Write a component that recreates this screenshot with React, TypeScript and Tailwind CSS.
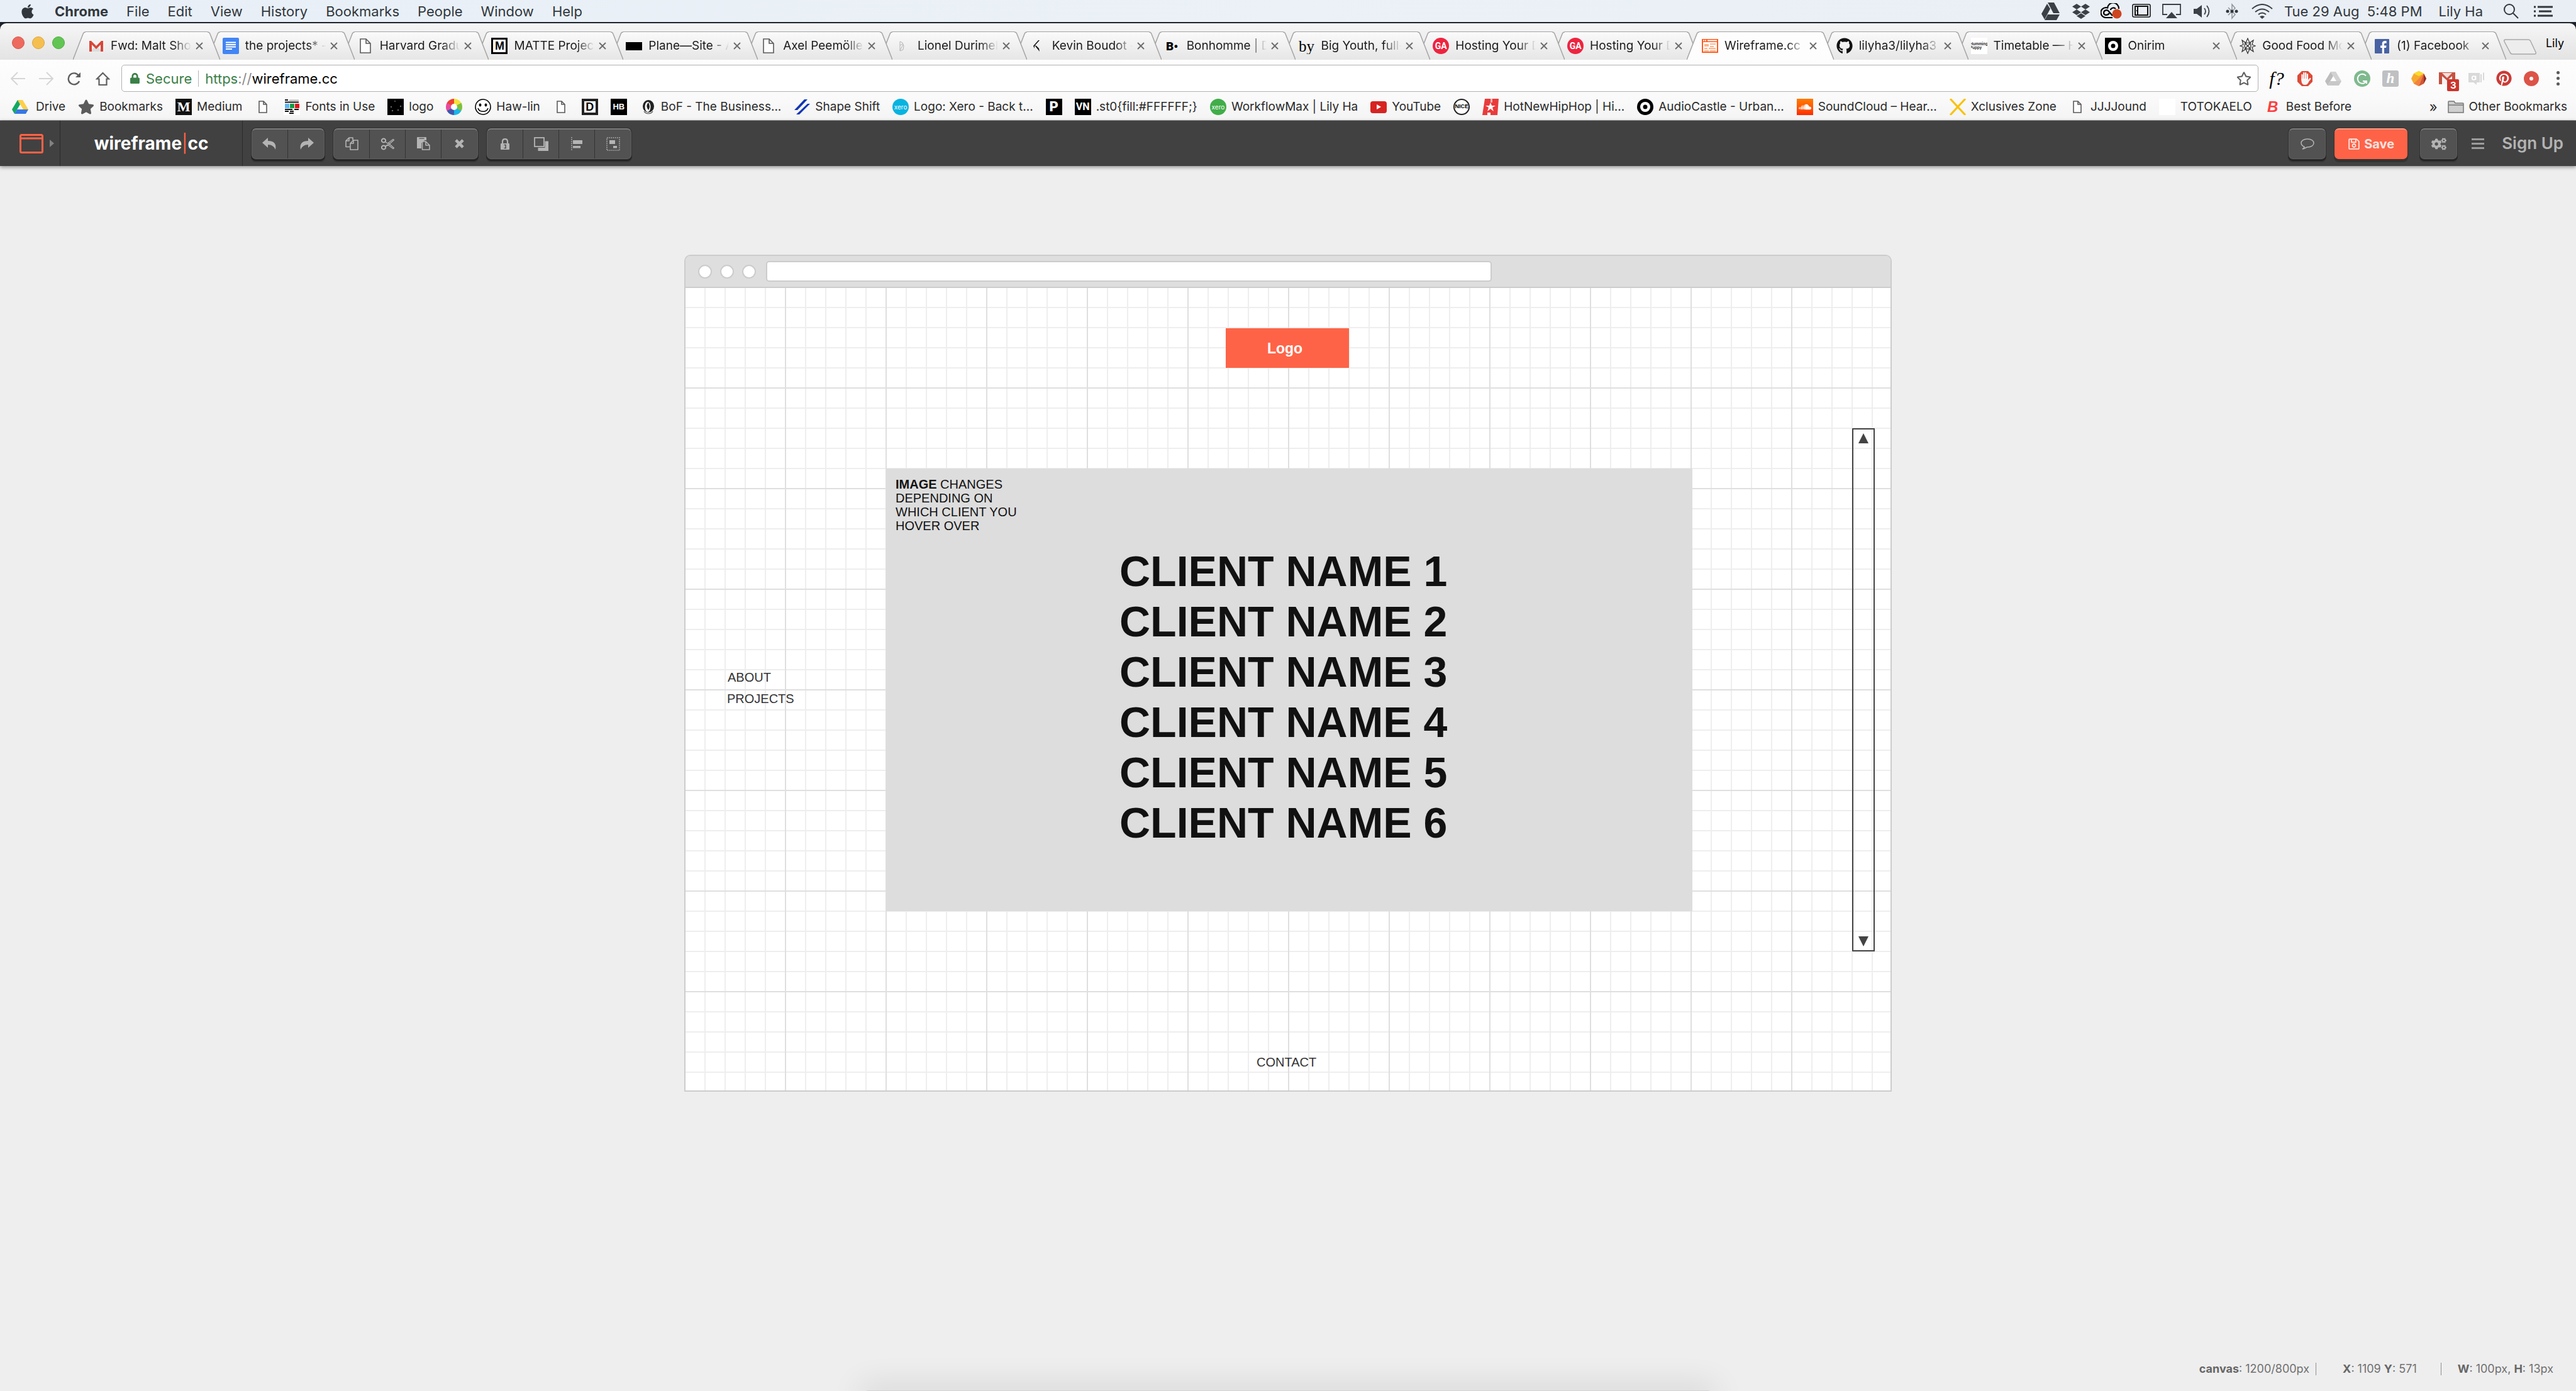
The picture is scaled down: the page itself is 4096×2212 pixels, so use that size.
import React from "react";
import type { ReactNode } from "react";
import {
  FaApple,
  FaCogs,
  FaDropbox,
  FaGithub,
  FaGoogleDrive,
  FaLock,
  FaPinterest,
  FaRegSave,
  FaRegStar,
  FaSoundcloud,
  FaStar,
} from "react-icons/fa";

/* ---------- small drawings ---------- */

function PageIcon({ big = false }: { big?: boolean }) {
  return (
    <svg viewBox="0 0 26 26" className={big ? "h-[28px] w-[26px]" : "h-[26px] w-[26px]"} fill="#fdfdfd" stroke="#5a5a5a" strokeWidth="1.6">
      <path d={big ? "M5 2h9l7 7v15H5z M14 2v7h7" : "M7 4h7l5 5v13H7z M14 4v5h5"} />
    </svg>
  );
}

function Tile({ className, children }: { className: string; children?: ReactNode }) {
  return (
    <span className={`flex h-[26px] w-[26px] shrink-0 items-center justify-center overflow-hidden leading-none ${className}`}>
      {children}
    </span>
  );
}

function GmailIcon() {
  return (
    <svg viewBox="0 0 26 26" className="h-[26px] w-[26px]">
      <rect x="2" y="5" width="22" height="17" fill="#f4f4f4" />
      <path d="M2 22l11-9 11 9z" fill="#dcdcdc" />
      <path d="M2 5h3l8 8 8-8h3v17h-4V11l-7 7-7-7v11H2z" fill="#d8463a" />
    </svg>
  );
}

function DocsIcon() {
  return (
    <svg viewBox="0 0 26 26" className="h-[26px] w-[26px]">
      <rect width="26" height="26" rx="2" fill="#4285f4" />
      <path d="M5 7.500h16M5 11h16M5 14.500h16M5 18h10" stroke="#fff" strokeWidth="1.800" />
    </svg>
  );
}

function MatteIcon() {
  return (
    <Tile className="border-[3px] border-black bg-white font-['Liberation_Sans'] text-[18px] font-bold text-black">M</Tile>
  );
}

function LeafSketch() {
  return (
    <svg viewBox="0 0 26 26" className="h-[26px] w-[26px]" fill="none" stroke="#b5b5b5" strokeWidth="1">
      <path d="M8 6l4 2 2 5-1 6-5 2zM8 12l4-2M8 20l5-9" />
    </svg>
  );
}

function KevinIcon() {
  return (
    <svg viewBox="0 0 26 26" className="h-[26px] w-[26px]" fill="#111">
      <path d="M14 4l2 0-8 9 0 4-2-4zM8 12l3 1 4 4 1 5z" />
    </svg>
  );
}

function GaIcon() {
  return (
    <Tile className="rounded-full bg-[#ee2440] font-['Roboto'] text-[14px] font-bold text-white">GA</Tile>
  );
}

function WireframeIcon() {
  return (
    <svg viewBox="0 0 26 26" className="h-[26px] w-[26px]">
      <rect x="1" y="3" width="24" height="20" fill="#fff" stroke="#ff5a1f" strokeWidth="2" />
      <rect x="0" y="2" width="26" height="5" fill="#ff5a1f" />
      <path d="M2 4.500h2M5 4.500h2M9 4.500h15" stroke="#fff" strokeWidth="2" />
      <path d="M4 11h7M4 13h7M13 10h9M13 14h6M4 17h5M11 17h11M4 20.500h7M13 20.500h9" stroke="#ffb38a" strokeWidth="2" />
    </svg>
  );
}

function RingIcon() {
  return (
    <Tile className="bg-black">
      <svg viewBox="0 0 26 26" className="h-[26px] w-[26px]">
        <circle cx="13" cy="13" r="8" fill="#fff" />
        <circle cx="13" cy="13" r="3.500" fill="#000" />
      </svg>
    </Tile>
  );
}

function StarFlower() {
  return (
    <svg viewBox="0 0 26 26" className="h-[26px] w-[26px]" fill="none" stroke="#333" strokeWidth="1.200">
      <path d="M13 1l3 7 6-4-2 7 5 2-5 2 2 7-6-4-3 7-3-7-6 4 2-7-5-2 5-2-2-7 6 4z" />
      <circle cx="13" cy="13" r="5" />
      <path d="M8 8l10 10M18 8L8 18" />
    </svg>
  );
}

function FacebookIcon() {
  return (
    <svg viewBox="0 0 26 26" className="h-[26px] w-[26px]">
      <rect x="1" y="2" width="23" height="23" rx="1" fill="#4862a3" />
      <path d="M16 25v-9h3l.5-3.500H16v-2c0-1.200.5-1.800 2-1.800h1.700V5.200c-3.500-.6-7 .1-7 4.300v3H10V16h2.700v9z" fill="#fff" />
    </svg>
  );
}

function DriveColor() {
  return (
    <svg viewBox="0 0 26 26" className="h-[26px] w-[26px]">
      <path d="M9 2h8l9 15h-8z" fill="#ffcf48" />
      <path d="M9 2l4 7-9 15-4-7z" fill="#11a861" />
      <path d="M8 17h18l-4 7H4z" fill="#3777e3" />
    </svg>
  );
}

function DriveGrey() {
  return (
    <svg viewBox="0 0 26 26" className="h-[26px] w-[26px]">
      <path d="M9 2h8l9 15h-8z" fill="#d2d2d2" />
      <path d="M9 2l4 7-9 15-4-7z" fill="#bdbdbd" />
      <path d="M8 17h18l-4 7H4z" fill="#c8c8c8" />
      <path d="M13 10l4 7H9z" fill="#fff" />
    </svg>
  );
}

function FontsInUseIcon() {
  return (
    <Tile className="bg-white">
      <svg viewBox="0 0 26 26" className="h-[26px] w-[26px]">
        <path d="M2 2h5M2 5.500h22M2 17h12M17 17h7M2 20h6M10 20h6M9 23h7" stroke="#111" strokeWidth="1.800" />
        <path d="M9 2.500h15" stroke="#aaa" strokeWidth="1.800" />
        <rect x="2" y="8" width="7" height="7" fill="#5fb5ec" />
        <rect x="10" y="8" width="7" height="7" fill="#139a43" />
        <rect x="18" y="8" width="7" height="7" fill="#e2121c" />
      </svg>
    </Tile>
  );
}

function DotsTile() {
  return (
    <Tile className="bg-black">
      <svg viewBox="0 0 26 26" className="h-[26px] w-[26px]" fill="#666">
        <circle cx="12" cy="4" r="1" />
        <circle cx="6" cy="13" r="1.200" />
        <circle cx="21" cy="12" r="1.200" />
        <circle cx="8" cy="19" r="1.200" />
        <circle cx="17" cy="18" r="1.200" />
      </svg>
    </Tile>
  );
}

function WheelIcon() {
  return (
    <span className="flex h-[26px] w-[26px] items-center justify-center rounded-full bg-[conic-gradient(#f5e13a_0_60deg,#7cc13c_0_120deg,#19b5ea_0_180deg,#3b58b0_0_240deg,#e64a9c_0_300deg,#ee4130_0)]">
      <span className="h-[10px] w-[10px] rounded-full bg-white" />
    </span>
  );
}

function FaceIcon() {
  return (
    <svg viewBox="0 0 26 26" className="h-[26px] w-[26px]">
      <circle cx="13" cy="13" r="12" fill="#fff" stroke="#000" strokeWidth="1.600" />
      <ellipse cx="8.500" cy="10" rx="2" ry="2.400" />
      <ellipse cx="17.500" cy="10" rx="2" ry="2.400" />
      <path d="M5 15c2 7 14 7 16 0" fill="none" stroke="#000" strokeWidth="1.500" />
    </svg>
  );
}

function BofIcon() {
  return (
    <svg viewBox="0 0 26 26" className="h-[26px] w-[26px]">
      <ellipse cx="14" cy="12" rx="9" ry="10" fill="#222" />
      <ellipse cx="13" cy="13" rx="4.500" ry="8" fill="#fff" />
      <path d="M14 6c-4 4-3 8 0 12 3-4 2-8 0-12z" fill="#222" />
      <path d="M7 20c3 5 11 5 14 0" fill="none" stroke="#444" strokeWidth="1.200" />
    </svg>
  );
}

function ShapeShiftIcon() {
  return (
    <svg viewBox="0 0 26 26" className="h-[26px] w-[26px]" fill="#1236b4">
      <path d="M17 1h5L6 18H1zM22 8h4L9 25H4z" />
    </svg>
  );
}

function YoutubeIcon() {
  return (
    <svg viewBox="0 0 26 26" className="h-[26px] w-[26px]">
      <rect x="0" y="4" width="26" height="19" rx="4" fill="#d62422" />
      <path d="M10 9v8l7-4z" fill="#fff" />
    </svg>
  );
}

function NiceIcon() {
  return (
    <Tile className="rounded-full border-2 border-[#222] bg-white font-['Liberation_Sans'] text-[9px] font-bold text-black">NICE</Tile>
  );
}

function HiphopIcon() {
  return (
    <svg viewBox="0 0 26 26" className="h-[26px] w-[26px]">
      <path d="M4 0h22l-2 26H13v-4l-5 0v4H0z" fill="#ea3b3b" />
      <path d="M13 0h3v6h-3z" fill="#f6b1b1" />
      <path d="M13 6l2 5h6l-5 3 2 6-5-4-5 4 2-6-5-3h6z" fill="#fff" />
    </svg>
  );
}

function TargetIcon() {
  return (
    <svg viewBox="0 0 26 26" className="h-[26px] w-[26px]">
      <circle cx="13" cy="13" r="13" />
      <circle cx="13" cy="13" r="8" fill="#fff" />
      <circle cx="13" cy="13" r="3.500" />
    </svg>
  );
}

function XIcon() {
  return (
    <svg viewBox="0 0 26 26" className="h-[26px] w-[26px]" stroke="#fac100" strokeWidth="3">
      <path d="M1 0l24 26M25 0L1 26" />
    </svg>
  );
}

function FolderIcon() {
  return (
    <svg viewBox="0 0 26 26" className="h-[26px] w-[26px]" fill="#cfcfcf" stroke="#777" strokeWidth="1.500">
      <path d="M1 22V5q0-1 1-1h8l2 3h12q1 0 1 1v14zM1 10h24" />
    </svg>
  );
}

/* ---------- macOS menu bar ---------- */

const MENUS = ["File", "Edit", "View", "History", "Bookmarks", "People", "Window", "Help"];

function StatusSlot({ label, children }: { label: string; children: ReactNode }) {
  return (
    <button aria-label={label} className="flex h-[30px] w-[34px] items-center justify-center text-[#3a4045]">
      {children}
    </button>
  );
}

function MenuBar() {
  return (
    <header className="flex h-[35px] items-center bg-linear-to-r from-[#e8eff7] via-[#ebf1f6] to-[#e9eef5] pr-[37px] pl-[32px] text-[22px] leading-none text-[#31373c]">
      <button aria-label="Apple menu">
        <FaApple className="h-[26px] w-[24px]" />
      </button>
      <nav className="ml-[31px] flex items-center gap-[29px]">
        <button className="font-bold">Chrome</button>
        {MENUS.map((m) => (
          <button key={m}>{m}</button>
        ))}
      </nav>
      <div className="ml-auto flex items-center gap-[14px]">
        <StatusSlot label="Drive">
          <svg viewBox="0 0 30 28" className="h-[28px] w-[30px]" fill="currentColor">
            <path d="M10 0h10l9 17H19zM9 2l5 8-9 17-5-9zM10 19h19l-5 9H5z" />
          </svg>
        </StatusSlot>
        <StatusSlot label="Dropbox">
          <FaDropbox className="h-[28px] w-[28px]" />
        </StatusSlot>
        <StatusSlot label="Creative Cloud">
          <svg viewBox="0 0 34 26" className="h-[26px] w-[34px]" fill="none" stroke="#000" strokeWidth="2.200">
            <path d="M9 23a8 8 0 0 1-1-16c2 0 3 .5 4 1.200M5 15a4.500 4.500 0 0 1 8-2l6 7" />
            <path d="M11 8a9 9 0 0 1 18 1M16 11c0-3 5-5 8-2M9 23h10" />
            <path d="M5 15c0 5 6 5 9 1" />
            <circle cx="26" cy="17" r="7.500" fill="#cf4520" stroke="none" />
          </svg>
        </StatusSlot>
        <StatusSlot label="Window manager">
          <svg viewBox="0 0 30 24" className="h-[24px] w-[30px]" fill="none" stroke="#111" strokeWidth="2">
            <rect x="1" y="1" width="28" height="20" rx="2" strokeWidth="1.500" />
            <rect x="5" y="4" width="20" height="14" />
            <path d="M9 4v14M7 11h3" />
          </svg>
        </StatusSlot>
        <StatusSlot label="AirPlay">
          <svg viewBox="0 0 30 24" className="h-[24px] w-[30px]" fill="none" stroke="currentColor" strokeWidth="1.800">
            <path d="M8 17H1V1h28v16h-7" />
            <path d="M15 13l9 10H6z" fill="currentColor" stroke="none" />
          </svg>
        </StatusSlot>
        <StatusSlot label="Volume">
          <svg viewBox="0 0 28 24" className="h-[24px] w-[28px]" fill="none" stroke="currentColor" strokeWidth="1.800">
            <path d="M1 8h5l8-6v20l-8-6H1z" fill="currentColor" stroke="none" />
            <path d="M18 7q4 5 0 10M22 3q7 9 0 18" />
          </svg>
        </StatusSlot>
        <StatusSlot label="Bluetooth">
          <svg viewBox="0 0 20 26" className="h-[26px] w-[20px]">
            <path d="M4 7l11 11-5 6V2l5 6L4 19" fill="none" stroke="#8d949a" strokeWidth="1.500" />
            <g fill="#30363b">
              <circle cx="3" cy="13" r="2.500" />
              <circle cx="10" cy="13" r="2.500" />
              <circle cx="17" cy="13" r="2.500" />
            </g>
          </svg>
        </StatusSlot>
        <StatusSlot label="Wi-Fi">
          <svg viewBox="0 0 34 24" className="h-[24px] w-[34px]" fill="none" stroke="currentColor" strokeWidth="2">
            <path d="M1 8q16-14 32 0M6 13q11-9 22 0M11 17q6-5 12 0" />
            <path d="M13 20.500q4-3 8 0l-4 3.500z" fill="currentColor" stroke="none" />
          </svg>
        </StatusSlot>
      </div>
      <button className="ml-[18px] whitespace-pre">{"Tue 29 Aug  5:48 PM"}</button>
      <button className="ml-[26px]">Lily Ha</button>
      <button aria-label="Search" className="ml-[33px]">
        <svg viewBox="0 0 24 24" className="h-[24px] w-[24px]" fill="none" stroke="currentColor" strokeWidth="2">
          <circle cx="9" cy="9" r="8" />
          <path d="M15 15l8 8" />
        </svg>
      </button>
      <button aria-label="Notification centre" className="ml-[24px]">
        <svg viewBox="0 0 30 18" className="h-[18px] w-[30px]" stroke="currentColor" strokeWidth="3">
          <path d="M0 2h3M0 9h3M0 16h3M6 2h24M8 9h20M6 16h24" />
        </svg>
      </button>
    </header>
  );
}

/* ---------- browser tabs ---------- */

type TabInfo = { title: string; icon: ReactNode; active?: boolean };

const TABS: TabInfo[] = [
  { title: "Fwd: Malt Sho", icon: <GmailIcon /> },
  { title: "the projects* -", icon: <DocsIcon /> },
  { title: "Harvard Gradu", icon: <PageIcon big /> },
  { title: "MATTE Project", icon: <MatteIcon /> },
  { title: "Plane—Site - A", icon: <span className="h-[13px] w-[26px] bg-black" /> },
  { title: "Axel Peemöller", icon: <PageIcon big /> },
  { title: "Lionel Durimel", icon: <LeafSketch /> },
  { title: "Kevin Boudot -", icon: <KevinIcon /> },
  { title: "Bonhomme | D", icon: <Tile className="font-['Roboto'] text-[19px] font-black text-black">B•</Tile> },
  { title: "Big Youth, full-", icon: <Tile className="font-['Liberation_Serif'] text-[25px] text-black">by</Tile> },
  { title: "Hosting Your D", icon: <GaIcon /> },
  { title: "Hosting Your D", icon: <GaIcon /> },
  { title: "Wireframe.cc -", icon: <WireframeIcon />, active: true },
  { title: "lilyha3/lilyha3", icon: <FaGithub className="h-[26px] w-[26px] text-[#111]" /> },
  { title: "Timetable — H", icon: <Tile className="bg-white text-[6px] font-bold text-[#333]">Humming Puppy</Tile> },
  { title: "Onirim", icon: <RingIcon /> },
  { title: "Good Food Mo", icon: <StarFlower /> },
  { title: "(1) Facebook", icon: <FacebookIcon /> },
];

function TabEdge({ active, flip = false }: { active: boolean; flip?: boolean }) {
  const id = active ? "tab-active" : "tab-idle";
  return (
    <svg viewBox="0 0 20 45" className={flip ? "h-[45px] w-5 shrink-0 -scale-x-100" : "h-[45px] w-5 shrink-0"}>
      <linearGradient id={id} x1="0" y1="0" x2="0" y2="1">
        <stop offset="0" stopColor={active ? "#fefefe" : "#fafafa"} />
        <stop offset="1" stopColor={active ? "#fdfdfd" : "#e6e6e6"} />
      </linearGradient>
      <path d="M0 45L16 4Q17 1 20 1V45z" fill={`url(#${id})`} />
      <path d="M0 45L16 4Q17 1 20 1" fill="none" stroke="#a4a4a4" strokeWidth="1.500" />
    </svg>
  );
}

function Tab({ tab, order }: { tab: TabInfo; order: number }) {
  const active = !!tab.active;
  return (
    <div
      role="tab"
      aria-selected={active}
      className="relative -mr-5 flex h-[45px] min-w-0 flex-1 last:mr-0"
      style={{ zIndex: active ? 40 : order }}
    >
      <TabEdge active={active} />
      <div
        className={
          active
            ? "flex min-w-0 flex-1 items-center border-t border-[#a4a4a4] bg-[#fdfdfd] pl-1"
            : "flex min-w-0 flex-1 items-center border-t border-[#a4a4a4] bg-linear-to-b from-[#fafafa] to-[#e6e6e6] pl-1"
        }
      >
        <span className="flex h-[28px] w-[26px] shrink-0 items-center justify-center">{tab.icon}</span>
        <span className="ml-[10px] min-w-0 flex-1 overflow-hidden text-[19px] leading-6 whitespace-nowrap text-[#1b1b1b] [mask-image:linear-gradient(90deg,#000_78%,transparent)]">
          {tab.title}
        </span>
        <button aria-label={`Close ${tab.title}`} className="flex h-[26px] w-[26px] shrink-0 items-center justify-center">
          <svg viewBox="0 0 12 12" className="h-[12px] w-[12px]" stroke="#6b6b6b" strokeWidth="1.800">
            <path d="M1 1l10 10M11 1L1 11" />
          </svg>
        </button>
      </div>
      <TabEdge active={active} flip />
    </div>
  );
}

function TabStrip() {
  return (
    <div className="bg-[#1d232b] pt-[2px]">
      <div className="flex h-[58px] items-end rounded-t-[10px] bg-linear-to-b from-[#f6f6f6] to-[#e3e3e3] pr-[19px]">
        <div className="flex h-full w-[116px] shrink-0 items-center gap-3 pt-1 pl-[19px]">
          <button aria-label="Close window" className="h-[20px] w-[20px] rounded-full border border-[#d9534c] bg-[#ed6a5e]" />
          <button aria-label="Minimise window" className="h-[20px] w-[20px] rounded-full border border-[#dfa23c] bg-[#f5bf4f]" />
          <button aria-label="Zoom window" className="h-[20px] w-[20px] rounded-full border border-[#4aad3d] bg-[#61c554]" />
        </div>
        <div role="tablist" className="isolate flex min-w-0 flex-1">
          {TABS.map((t, i) => (
            <Tab key={i} tab={t} order={TABS.length - i} />
          ))}
        </div>
        <button aria-label="New tab" className="-ml-1 mb-2">
          <svg viewBox="0 0 52 25" className="h-[25px] w-[52px]" fill="#ededed" stroke="#a8a8a8" strokeWidth="1.500">
            <path d="M3 1h36q3 0 4 3l8 17q1 3-2 3H14q-3 0-4-3L1 4q-1-3 2-3z" />
          </svg>
        </button>
        <button className="mb-[14px] ml-[15px] text-[18px] leading-6 text-black">Lily</button>
      </div>
    </div>
  );
}

/* ---------- address row ---------- */

function AddressRow() {
  return (
    <div className="flex h-[59px] items-center bg-linear-to-b from-[#fdfdfd] to-[#fafafa] pr-[26px] pl-[17px]">
      <div className="flex w-[176px] shrink-0 items-center gap-[22px]">
        <button aria-label="Back">
          <svg viewBox="0 0 23 22" className="h-[22px] w-[23px]" fill="none" stroke="#d6d6d6" strokeWidth="2">
            <path d="M23 11H2M11 1L1 11l10 10" />
          </svg>
        </button>
        <button aria-label="Forward">
          <svg viewBox="0 0 23 22" className="h-[22px] w-[23px]" fill="none" stroke="#d6d6d6" strokeWidth="2">
            <path d="M0 11h21M12 1l10 10-10 10" />
          </svg>
        </button>
        <button aria-label="Reload">
          <svg viewBox="0 0 23 22" className="h-[22px] w-[23px]" fill="none" stroke="#5f5f5f" strokeWidth="2.400">
            <path d="M19 15a9 9 0 1 1-1-9" />
            <path d="M21 1v8h-8z" fill="#5f5f5f" stroke="none" />
          </svg>
        </button>
        <button aria-label="Home">
          <svg viewBox="0 0 23 22" className="h-[22px] w-[23px]" fill="none" stroke="#5f5f5f" strokeWidth="2.200">
            <path d="M2 11.500L11.500 2l9.500 9.500h-3.500V21h-12v-9.500z" />
          </svg>
        </button>
      </div>
      <div className="flex h-[43px] min-w-0 flex-1 items-center rounded-[5px] border border-[#b2b2b2] bg-white pr-[10px] pl-[13px] text-[22px] leading-none">
        <FaLock className="h-[17px] w-[15px] text-[#3b8048]" />
        <span className="ml-[10px] text-[#3b8048]">Secure</span>
        <span className="mx-[10px] h-[26px] w-px bg-[#b5b5b5]" />
        <label htmlFor="url" className="text-[#8a8a8a]">
          <span className="text-[#3b8048]">https</span>://
        </label>
        <input id="url" defaultValue="wireframe.cc" className="h-[30px] min-w-0 flex-1 text-black outline-none" />
        <button aria-label="Bookmark this page">
          <FaRegStar className="h-[24px] w-[24px] text-[#5f5f5f]" />
        </button>
      </div>
      <div className="ml-4 flex w-[430px] shrink-0 items-center justify-between">
        <button aria-label="Font finder" className="flex h-[26px] w-[26px] items-center justify-center font-['Liberation_Serif'] text-[30px] leading-none text-black italic">
          f?
        </button>
        <button aria-label="Ad blocker">
          <svg viewBox="0 0 26 26" className="h-[26px] w-[26px]">
            <path d="M8 1h10l7 7v10l-7 7H8l-7-7V8z" fill="#dd4a38" />
            <path d="M8.500 7v8M11.300 4v11M14.200 4v11M17 6v9M21.500 13l-4 5" stroke="#fff" strokeWidth="2.200" strokeLinecap="round" />
            <path d="M7.400 13h10.700l1 5q-2 5-6 5-5 0-5.700-6z" fill="#f6f6f6" />
          </svg>
        </button>
        <button aria-label="Save to Drive">
          <DriveGrey />
        </button>
        <button aria-label="Grammar checker">
          <svg viewBox="0 0 26 26" className="h-[26px] w-[26px]" fill="none" stroke="#fff" strokeWidth="2">
            <circle cx="13" cy="13" r="13" fill="#7fba8e" stroke="none" />
            <path d="M19 8.500a7.500 7.500 0 1 0 1 8M14 17h6v4" />
          </svg>
        </button>
        <button aria-label="Coupons" className="flex h-[26px] w-[26px] items-center justify-center rounded-[3px] bg-[#bfc0c2] font-['Liberation_Serif'] text-[23px] leading-none font-bold text-white italic">
          h
        </button>
        <button aria-label="Gem">
          <svg viewBox="0 0 26 26" className="h-[26px] w-[26px]">
            <path d="M13 1l8 4 4 8-4 8-8 4-8-4-4-8 4-8z" fill="#f7a92f" />
            <path d="M13 1l8 4-8 4-8-4z" fill="#fbdc2c" />
            <path d="M21 5l4 8-4 8z" fill="#8c2f2c" />
            <path d="M21 5v16l-8 4z" fill="#d2553a" />
            <path d="M21 5l-8 20-8-4z" fill="#f08340" />
          </svg>
        </button>
        <button aria-label="Mail notifier, 3 unread" className="relative h-[26px] w-[26px]">
          <svg viewBox="0 0 26 26" className="h-[26px] w-[26px]">
            <rect y="3" width="26" height="19" fill="#c6513f" />
            <path d="M5 22V9l8 7 8-7v13z" fill="#f5f2f1" />
            <path d="M5 4l8 8 8-8z" fill="#f3dedb" />
          </svg>
          <span className="absolute top-[14px] left-[13px] flex h-[19px] w-[19px] items-center justify-center rounded-[2px] bg-[#cc352c] text-[15px] leading-none font-bold text-white">
            3
          </span>
        </button>
        <button aria-label="Chat">
          <svg viewBox="0 0 26 26" className="h-[26px] w-[26px]" fill="#d9d9d9">
            <path d="M1 4h18v15h-5v4l-5-4H1zM20 6h2v13h-2zM24 4l2-1v13l-2-1z" />
            <circle cx="9.500" cy="12" r="2.800" fill="none" stroke="#fff" strokeWidth="1.800" />
            <path d="M12.500 8.500V15" stroke="#fff" strokeWidth="1.800" />
          </svg>
        </button>
        <button aria-label="Pin it">
          <FaPinterest className="h-[25px] w-[25px] text-[#cb3a36]" />
        </button>
        <button aria-label="Recorder" className="flex h-[24px] w-[24px] items-center justify-center rounded-full bg-[#dd5347]">
          <span className="h-[6px] w-[6px] rounded-full bg-white" />
        </button>
      </div>
      <button aria-label="Browser menu" className="ml-[28px] flex flex-col gap-1">
        <span className="h-[5px] w-[5px] rounded-full bg-[#5a5a5a]" />
        <span className="h-[5px] w-[5px] rounded-full bg-[#5a5a5a]" />
        <span className="h-[5px] w-[5px] rounded-full bg-[#5a5a5a]" />
      </button>
    </div>
  );
}

/* ---------- bookmarks ---------- */

type Bookmark = { text?: string; icon: ReactNode };

const BOOKMARKS: Bookmark[] = [
  { text: "Drive", icon: <DriveColor /> },
  { text: "Bookmarks", icon: <FaStar className="h-[26px] w-[26px] text-[#5b5b5b]" /> },
  { text: "Medium", icon: <Tile className="bg-[#111] font-['Liberation_Serif'] text-[22px] font-bold text-white">M</Tile> },
  { icon: <PageIcon /> },
  { text: "Fonts in Use", icon: <FontsInUseIcon /> },
  { text: "logo", icon: <DotsTile /> },
  { icon: <WheelIcon /> },
  { text: "Haw-lin", icon: <FaceIcon /> },
  { icon: <PageIcon /> },
  { icon: <Tile className="border-[4px] border-[#222] bg-white font-['Liberation_Sans'] text-[18px] font-bold text-black">D</Tile> },
  { icon: <Tile className="bg-black font-['Liberation_Sans'] text-[13px] font-bold text-white">HB</Tile> },
  { text: "BoF - The Business...", icon: <BofIcon /> },
  { text: "Shape Shift", icon: <ShapeShiftIcon /> },
  { text: "Logo: Xero - Back t...", icon: <Tile className="rounded-full bg-[#06b3e1] text-[10px] text-white">xero</Tile> },
  { icon: <Tile className="bg-black font-['Roboto'] text-[22px] font-black text-white">P</Tile> },
  { text: ".st0{fill:#FFFFFF;}", icon: <Tile className="bg-black font-['Roboto'] text-[16px] font-bold text-white">VN</Tile> },
  { text: "WorkflowMax | Lily Ha", icon: <Tile className="rounded-full bg-[#41ad49] text-[10px] text-white">xero</Tile> },
  { text: "YouTube", icon: <YoutubeIcon /> },
  { icon: <NiceIcon /> },
  { text: "HotNewHipHop | Hi...", icon: <HiphopIcon /> },
  { text: "AudioCastle - Urban...", icon: <TargetIcon /> },
  { text: "SoundCloud – Hear...", icon: <Tile className="bg-linear-to-b from-[#ff7a00] to-[#ff2500]"><FaSoundcloud className="h-[20px] w-[20px] text-white" /></Tile> },
  { text: "Xclusives Zone", icon: <XIcon /> },
  { text: "JJJJound", icon: <PageIcon /> },
  { text: "TOTOKAELO", icon: <Tile className="bg-white" /> },
  { text: "Best Before", icon: <Tile className="font-['Liberation_Sans'] text-[24px] font-bold text-[#fb3f3f] italic">B</Tile> },
];

function BookmarksBar() {
  return (
    <nav className="flex h-[38px] items-center justify-between border-b border-[#8b8b8b] bg-linear-to-b from-[#fafafa] to-[#f4f4f4] pr-[14px] pb-[6px] pl-[19px] text-[19px] leading-6 text-[#2a2a2a]">
      <div className="flex items-center gap-5">
        {BOOKMARKS.map((b, i) => (
          <a key={i} href="#" aria-label={b.text ?? "Bookmark"} className="flex shrink-0 items-center gap-2 first:gap-3">
            {b.icon}
            {b.text && <span className="whitespace-nowrap">{b.text}</span>}
          </a>
        ))}
      </div>
      <div className="flex items-center gap-4">
        <button className="text-[22px]">»</button>
        <a href="#" className="flex items-center gap-2">
          <FolderIcon />
          <span>Other Bookmarks</span>
        </a>
      </div>
    </nav>
  );
}

/* ---------- application bar ---------- */

function ToolGroup({ children }: { children: ReactNode }) {
  return (
    <div className="flex h-[49px] divide-x divide-[#343434] overflow-hidden rounded-[7px] border border-t-2 border-[#5e5e5e] border-t-[#7b7b7b] bg-[#525252] shadow-[0_0_0_1px_#303030,0_2px_0_1px_#222222,0_4px_0_1px_#363636]">
      {children}
    </div>
  );
}

function Tool({ label, children }: { label: string; children: ReactNode }) {
  return (
    <button aria-label={label} className="flex w-[57px] items-center justify-center text-[#b4b4b4]">
      {children}
    </button>
  );
}

function AppBar() {
  return (
    <div className="relative z-10 flex h-[72px] items-center bg-[#414141] pr-[20px] shadow-[0_2px_6px_rgba(0,0,0,0.4)]">
      <button aria-label="Stencil" className="flex h-full w-[96px] shrink-0 items-center border-r border-[#2a2a2a] pl-[31px]">
        <svg viewBox="0 0 38 31" className="h-[31px] w-[38px]" fill="none" stroke="#ff6347" strokeWidth="3">
          <rect x="1.500" y="1.500" width="35" height="28" rx="2" />
          <path d="M2 7h34" strokeWidth="3" />
          <path d="M5 4.500h2M9 4.500h2" stroke="#414141" strokeWidth="1.500" />
        </svg>
        <svg viewBox="0 0 7 12" className="ml-[10px] h-[12px] w-[7px]" fill="#828282">
          <path d="M0 0l7 6-7 6z" />
        </svg>
      </button>
      <div className="flex h-full w-[290px] shrink-0 items-center justify-center border-r border-[#2a2a2a] text-[28px] leading-none font-bold text-white">
        wireframe<span className="font-normal text-[#ff6347]">|</span>cc
      </div>
      <div className="ml-[14px] flex gap-[14px]">
        <ToolGroup>
          <Tool label="Undo">
            <svg viewBox="0 0 24 20" className="h-[20px] w-[24px]" fill="currentColor">
              <path d="M9 0v5c9 0 14 4 12 14-2-5-6-8-12-8v5L0 8z" />
            </svg>
          </Tool>
          <Tool label="Redo">
            <svg viewBox="0 0 24 20" className="h-[20px] w-[24px]" fill="currentColor">
              <path d="M15 0v5C6 5 1 9 3 19c2-5 6-8 12-8v5l9-8z" />
            </svg>
          </Tool>
        </ToolGroup>
        <ToolGroup>
          <Tool label="Copy">
            <svg viewBox="0 0 21 21" className="h-[21px] w-[21px]" fill="none" stroke="currentColor" strokeWidth="1.600" strokeLinejoin="round">
              <path d="M7.500 15.500H1V6l5-5h6v4M6 1v5H1" />
              <path d="M8 20V10l5-5h7v15zM13 5v5H8" />
            </svg>
          </Tool>
          <Tool label="Cut">
            <svg viewBox="0 0 21 20" className="h-[20px] w-[21px]" fill="none" stroke="currentColor">
              <ellipse cx="4" cy="4.500" rx="3.200" ry="3" strokeWidth="2" />
              <ellipse cx="4" cy="15.500" rx="3.200" ry="3" strokeWidth="2" />
              <path d="M6.500 6.500l4 2.500L19 2.500l1.500 1-9.500 8.500-4.500 2M6.500 13.500l4-2.500 8.500 6.500 1.500-1L11 8" strokeWidth="1.300" />
            </svg>
          </Tool>
          <Tool label="Paste">
            <svg viewBox="0 0 21 21" className="h-[21px] w-[21px]">
              <path d="M1 0h13q1 0 1 1v4h-2.500L7 9.500V18H0V1q0-1 1-1z" fill="currentColor" />
              <path d="M3.500 2.200h8" stroke="#525252" strokeWidth="1.300" />
              <path d="M8.500 7H14l6 6v7H8.500zM14 7v6h6" fill="none" stroke="currentColor" strokeWidth="1.600" strokeLinejoin="round" />
            </svg>
          </Tool>
          <Tool label="Delete">
            <svg viewBox="0 0 16 16" className="h-[15px] w-[15px]" stroke="currentColor" strokeWidth="4.800">
              <path d="M2 2l12 12M14 2L2 14" />
            </svg>
          </Tool>
        </ToolGroup>
        <ToolGroup>
          <Tool label="Lock">
            <svg viewBox="0 0 14 18" className="h-[18px] w-[14px]">
              <path d="M3 9V5.500Q3 1.200 7 1.200t4 4.300V9" fill="none" stroke="currentColor" strokeWidth="2.200" />
              <rect x="0" y="8" width="14" height="10" rx="1" fill="currentColor" />
              <path d="M5.500 10.500H8V15M5.500 15.500h3.500" stroke="#525252" strokeWidth="1.500" fill="none" />
            </svg>
          </Tool>
          <Tool label="Arrange">
            <svg viewBox="0 0 23 22" className="h-[22px] w-[23px]">
              <path d="M17.500 6.500H23V22H6.500v-5h11z" fill="currentColor" />
              <rect x="1" y="1" width="15" height="14" fill="none" stroke="currentColor" strokeWidth="1.800" />
            </svg>
          </Tool>
          <Tool label="Align">
            <svg viewBox="0 0 18 22" className="h-[22px] w-[18px]" fill="currentColor">
              <path d="M1 0v22" stroke="currentColor" strokeWidth="1.600" strokeDasharray="1.600 1.600" />
              <rect x="3" y="5" width="15" height="6" />
              <rect x="3" y="14" width="12" height="3.500" />
            </svg>
          </Tool>
          <Tool label="Group">
            <svg viewBox="0 0 22 22" className="h-[22px] w-[22px]" fill="currentColor">
              <rect x="1" y="1" width="20" height="20" fill="none" stroke="currentColor" strokeWidth="1.600" strokeDasharray="1.600 1.600" />
              <rect x="5" y="5" width="9" height="6" />
              <rect x="11" y="14" width="6" height="3.500" />
            </svg>
          </Tool>
        </ToolGroup>
      </div>
      <div className="ml-auto flex items-center">
        <ToolGroup>
          <Tool label="Comments">
            <svg viewBox="0 0 22 18" className="h-[18px] w-[22px]" fill="none" stroke="currentColor" strokeWidth="1.500">
              <path d="M3 17c2-1 3-2 3-3.500C3 12 1 10 1 7.500 1 4 5 1 11 1s10 3 10 6.500S17 14 11 14c-2 0-5 3-8 3z" />
            </svg>
          </Tool>
        </ToolGroup>
        <button className="ml-[14px] flex h-[49px] w-[116px] items-center justify-center gap-[6px] rounded-[7px] border-t-2 border-[#ff9c86] bg-[#ff6347] text-[20px] leading-none font-bold text-[#f6e4e0] shadow-[0_0_0_1px_#333333,0_4px_0_1px_#333333]">
          <FaRegSave className="h-[20px] w-[20px]" />
          Save
        </button>
        <div className="ml-5">
          <ToolGroup>
            <Tool label="Settings">
              <FaCogs className="h-[22px] w-[24px]" />
            </Tool>
          </ToolGroup>
        </div>
        <button className="ml-[23px] flex items-center gap-[28px] text-[26px] leading-none font-semibold text-[#b3b3b3]">
          <svg viewBox="0 0 20 17" className="h-[17px] w-[20px]" stroke="#9c9c9c" strokeWidth="3">
            <path d="M0 1.500h20M0 8.500h20M0 15.500h20" />
          </svg>
          Sign Up
        </button>
      </div>
    </div>
  );
}

/* ---------- wireframe canvas ---------- */

const CLIENTS = [1, 2, 3, 4, 5, 6];

function Canvas() {
  return (
    <section className="w-[1920px] rounded-t-[10px] border-2 border-[#cccccc] font-['Liberation_Sans',Arial,sans-serif] text-[20px] leading-[22px] text-[#333333]">
      <div className="flex h-[51px] items-center rounded-t-[8px] border-b-2 border-[#cccccc] bg-[#dedede] pl-[20px]">
        <div className="flex gap-[13px]">
          <span className="h-[22px] w-[22px] rounded-full border-2 border-[#cccccc] bg-white" />
          <span className="h-[22px] w-[22px] rounded-full border-2 border-[#cccccc] bg-white" />
          <span className="h-[22px] w-[22px] rounded-full border-2 border-[#cccccc] bg-white" />
        </div>
        <div className="ml-[16px] h-[33px] w-[1154px] rounded-[5px] border-2 border-[#cccccc] bg-white" />
      </div>
      <div className="relative h-[1276px] bg-white bg-[linear-gradient(#dfdfdf_0_2px,transparent_0),linear-gradient(90deg,#dfdfdf_0_2px,transparent_0),linear-gradient(#eeeeee_0_2px,transparent_0),linear-gradient(90deg,#eeeeee_0_2px,transparent_0)] bg-size-[160px_160px,160px_160px,32px_32px,32px_32px] bg-position-[-2px_-2px]">
        <div className="absolute top-[64px] left-[859px] flex h-[63px] w-[196px] items-center justify-center bg-[#ff6347] pr-2 text-[23px] font-bold text-white">
          Logo
        </div>
        <div className="absolute top-[287px] left-[319px] h-[704px] w-[1282px] bg-[#dddddd] text-[#111111]">
          <p className="w-[230px] pt-[14px] pl-[15px]">
            <b>IMAGE</b> CHANGES DEPENDING ON WHICH CLIENT YOU HOVER OVER
          </p>
          <ul className="absolute top-[123px] left-[371px] text-[68px] leading-[80px] font-bold whitespace-nowrap">
            {CLIENTS.map((n) => (
              <li key={n}>CLIENT NAME {n}</li>
            ))}
          </ul>
        </div>
        <a href="#" className="absolute top-[608px] left-[67px]">ABOUT</a>
        <a href="#" className="absolute top-[642px] left-[66px]">PROJECTS</a>
        <a href="#" className="absolute top-[1220px] left-[908px]">CONTACT</a>
        <div className="absolute top-[223px] left-[1855px] flex h-[832px] w-[36px] flex-col items-center justify-between border-2 border-[#444444] py-[6px]">
          <svg viewBox="0 0 16 16" className="h-[16px] w-[16px]" fill="#444444">
            <path d="M8 0l8 16H0z" />
          </svg>
          <svg viewBox="0 0 16 16" className="h-[16px] w-[16px]" fill="#444444">
            <path d="M8 16L0 0h16z" />
          </svg>
        </div>
      </div>
    </section>
  );
}

function StatusLine() {
  return (
    <footer className="flex h-[20px] items-center justify-end pr-[36px] text-[18px] leading-none text-[#707070]">
      <span>
        <b className="text-[#666666]">canvas</b>: 1200/800px
      </span>
      <span className="ml-[10px] h-[20px] w-px bg-[#909090]" />
      <span className="ml-[42px]">
        <b className="text-[#666666]">X</b>: 1109 <b className="text-[#666666]">Y</b>: 571
      </span>
      <span className="ml-[38px] h-[20px] w-px bg-[#909090]" />
      <span className="ml-[26px]">
        <b className="text-[#666666]">W</b>: 100px, <b className="text-[#666666]">H</b>: 13px
      </span>
    </footer>
  );
}

export default function App() {
  return (
    <div className="relative flex min-h-screen flex-col overflow-hidden bg-[#eeeeee] font-['Inter',sans-serif]">
      <MenuBar />
      <TabStrip />
      <AddressRow />
      <BookmarksBar />
      <AppBar />
      <main className="flex flex-1 justify-center pt-[141px]">
        <div>
          <Canvas />
        </div>
      </main>
      <div className="pb-[25px]">
        <StatusLine />
      </div>
      <div className="pointer-events-none absolute inset-x-0 bottom-0 flex justify-center">
        <div className="h-px w-[1340px] bg-[#d4d4d4] shadow-[0_6px_50px_10px_rgba(0,0,0,0.16)]" />
      </div>
    </div>
  );
}
